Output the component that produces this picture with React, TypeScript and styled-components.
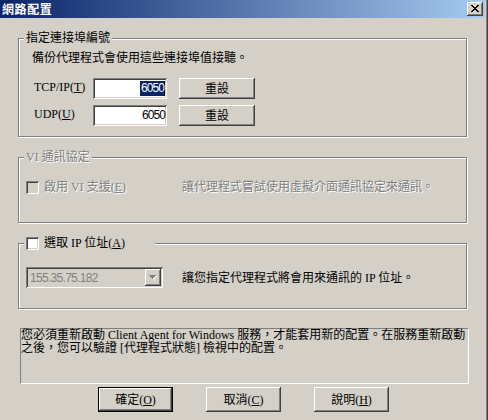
import React from "react";
import styled, { createGlobalStyle, css } from "styled-components";

const Global = createGlobalStyle`
  html, body { margin: 0; padding: 0; background: #D4D0C8; }
  body {
    font-family: "Liberation Serif", "Noto Sans CJK TC", serif;
    font-size: 12px;
    color: #000;
  }
  * { box-sizing: border-box; }
`;

const Window = styled.div`
  width: 488px;
  height: 420px;
  overflow: hidden;
  background: #d4d0c8;
  padding-right: 3px;
  box-shadow: inset -1px 0 #404040, inset -2px 0 #808080;
  display: flex;
  flex-direction: column;
`;

const TitleBar = styled.div`
  height: 18px;
  flex: none;
  display: flex;
  align-items: center;
  justify-content: space-between;
  padding: 0 2px 0 2px;
  background: linear-gradient(to right, #0a246a, #a6caf0);
`;

const Title = styled.span`
  color: #fff;
  font-family: "Noto Sans CJK TC", sans-serif;
  font-weight: 700;
  font-size: 12px;
  line-height: 14px;
  letter-spacing: 0.6px;
`;

const CloseButton = styled.div`
  width: 16px;
  height: 14px;
  background: #d4d0c8;
  box-shadow: inset -1px -1px #404040, inset 1px 1px #fff,
    inset -2px -2px #808080, inset 2px 2px #d4d0c8;
  display: flex;
  align-items: center;
  justify-content: center;
  padding-bottom: 1px;
`;

const Body = styled.div`
  display: flex;
  flex-direction: column;
  align-items: flex-start;
  padding: 20px 0 0 18px;
`;

const GroupBox = styled.div<{ $h: number; $mt?: number }>`
  width: 449px;
  height: ${(p) => p.$h}px;
  margin-top: ${(p) => p.$mt ?? 0}px;
  border: 1px solid #808080;
  box-shadow: inset 1px 1px 0 #fff, 1px 1px 0 #fff;
  display: flex;
  flex-direction: column;
  align-items: flex-start;
`;

const disabledText = css`
  color: #808080;
  text-shadow: 1px 1px 0 #fff;
`;

const Legend = styled.div<{ $disabled?: boolean; $w?: number }>`
  margin: -8px 0 0 5px;
  padding: 0 2px;
  height: 14px;
  line-height: 14px;
  background: #d4d0c8;
  display: flex;
  align-items: center;
  white-space: nowrap;
  ${(p) => (p.$w ? `width: ${p.$w}px;` : "")}
  ${(p) => (p.$disabled ? disabledText : "")}
`;

const Desc = styled.div`
  margin: 6px 0 0 13px;
  line-height: 14px;
  white-space: nowrap;
`;

const PortGrid = styled.div`
  margin: 13px 0 0 15px;
  display: grid;
  grid-template-columns: 47px 74px 76px;
  grid-auto-rows: 21px;
  column-gap: 12px;
  row-gap: 6px;
  align-items: center;
`;

const FieldLabel = styled.span`
  line-height: 14px;
  margin-top: -3px;
  white-space: nowrap;
`;

const sunken = css`
  box-shadow: inset 1px 1px #808080, inset -1px -1px #fff,
    inset 2px 2px #404040, inset -2px -2px #d4d0c8;
`;

const Edit = styled.div`
  height: 21px;
  background: #fff;
  ${sunken};
  display: flex;
  align-items: center;
  justify-content: flex-end;
  padding: 0 2px 0 3px;
  font-family: "Liberation Sans", sans-serif;
  font-size: 12px;
  letter-spacing: -0.9px;
  line-height: 15px;
`;

const Selection = styled.span`
  background: #0a246a;
  color: #fff;
  padding: 0 0 0 1px;
  border-right: 1px solid #000;
`;

const Button = styled.button<{ $default?: boolean; $w?: number; $h?: number }>`
  width: ${(p) => p.$w ?? 76}px;
  height: ${(p) => p.$h ?? 21}px;
  margin: 0;
  padding: 0;
  background: #d4d0c8;
  border: ${(p) => (p.$default ? "1px solid #000" : "none")};
  box-shadow: inset -1px -1px #404040, inset 1px 1px #fff,
    inset -2px -2px #808080, inset 2px 2px #d4d0c8;
  font-family: "Liberation Serif", "Noto Sans CJK TC", serif;
  font-size: 12px;
  line-height: 14px;
  color: #000;
  display: flex;
  align-items: center;
  justify-content: center;
`;

const OptionRow = styled.div<{ $mt: number }>`
  margin: ${(p) => p.$mt}px 0 0 7px;
  display: grid;
  grid-template-columns: 156px auto;
  align-items: center;
`;

const CheckLine = styled.label<{ $disabled?: boolean }>`
  display: flex;
  align-items: center;
  gap: 5px;
  line-height: 14px;
  white-space: nowrap;
  ${(p) => (p.$disabled ? disabledText : "")}
`;

const CheckBox = styled.span<{ $disabled?: boolean }>`
  width: 13px;
  height: 13px;
  flex: none;
  background: ${(p) => (p.$disabled ? "#d4d0c8" : "#fff")};
  ${sunken};
  text-shadow: none;
`;

const Hint = styled.span<{ $disabled?: boolean }>`
  line-height: 14px;
  white-space: nowrap;
  ${(p) => (p.$disabled ? disabledText : "")}
`;

const Combo = styled.div`
  width: 137px;
  height: 21px;
  background: #d4d0c8;
  ${sunken};
  display: flex;
  align-items: center;
  justify-content: space-between;
  padding: 2px 2px 2px 4px;
  font-family: "Liberation Sans", sans-serif;
  font-size: 12px;
  letter-spacing: -0.7px;
  color: #808080;
`;

const DropButton = styled.span`
  width: 16px;
  height: 17px;
  background: #d4d0c8;
  box-shadow: inset -1px -1px #404040, inset 1px 1px #fff,
    inset -2px -2px #808080, inset 2px 2px #d4d0c8;
  display: flex;
  align-items: center;
  justify-content: center;
`;

const InfoBox = styled.div`
  margin: 19px 0 0 2px;
  width: 449px;
  height: 56px;
  border-style: solid;
  border-width: 1px;
  border-color: #808080 #fff #fff #808080;
  line-height: 13px;
  white-space: nowrap;
`;

const ButtonRow = styled.div`
  margin: 3px 0 0 80px;
  display: flex;
  gap: 33px;
`;

const CloseGlyph = () => (
  <svg width="8" height="7" viewBox="0 0 8 7" shapeRendering="crispEdges">
    <path
      d="M0 0h2v1H0zM6 0h2v1H6zM1 1h2v1H1zM5 1h2v1H5zM2 2h4v1H2zM3 3h2v1H3zM2 4h4v1H2zM1 5h2v1H1zM5 5h2v1H5zM0 6h2v1H0zM6 6h2v1H6z"
      fill="#000"
    />
  </svg>
);

const DisabledArrow = () => (
  <svg width="8" height="5" viewBox="0 0 8 5" shapeRendering="crispEdges">
    <path d="M1 1h7v1H1zM2 2h5v1H2zM3 3h3v1H3zM4 4h1v1H4z" fill="#fff" />
    <path d="M0 0h7v1H0zM1 1h5v1H1zM2 2h3v1H2zM3 3h1v1H3z" fill="#808080" />
  </svg>
);

export default function App() {
  return (
    <>
      <Global />
      <Window>
        <TitleBar>
          <Title>網路配置</Title>
          <CloseButton>
            <CloseGlyph />
          </CloseButton>
        </TitleBar>
        <Body>
          <GroupBox $h={99}>
            <Legend>指定連接埠編號</Legend>
            <Desc>備份代理程式會使用這些連接埠值接聽。</Desc>
            <PortGrid>
              <FieldLabel>
                TCP/IP(<u>T</u>)
              </FieldLabel>
              <Edit>
                <Selection>6050</Selection>
              </Edit>
              <Button>重設</Button>
              <FieldLabel>
                UDP(<u>U</u>)
              </FieldLabel>
              <Edit>6050</Edit>
              <Button>重設</Button>
            </PortGrid>
          </GroupBox>

          <GroupBox $h={66} $mt={20}>
            <Legend $disabled>VI 通訊協定</Legend>
            <OptionRow $mt={16}>
              <CheckLine $disabled>
                <CheckBox $disabled />
                <span>
                  啟用 VI 支援(<u>E</u>)
                </span>
              </CheckLine>
              <Hint $disabled>讓代理程式嘗試使用虛擬介面通訊協定來通訊。</Hint>
            </OptionRow>
          </GroupBox>

          <GroupBox $h={66} $mt={20}>
            <Legend $w={131}>
              <CheckLine>
                <CheckBox />
                <span>
                  選取 IP 位址(<u>A</u>)
                </span>
              </CheckLine>
            </Legend>
            <OptionRow $mt={17}>
              <Combo>
                <span>155.35.75.182</span>
                <DropButton>
                  <DisabledArrow />
                </DropButton>
              </Combo>
              <Hint>讓您指定代理程式將會用來通訊的 IP 位址。</Hint>
            </OptionRow>
          </GroupBox>

          <InfoBox>
            您必須重新啟動 Client Agent for Windows 服務，才能套用新的配置。在服務重新啟動
            <br />
            之後，您可以驗證 [代理程式狀態] 檢視中的配置。
          </InfoBox>

          <ButtonRow>
            <Button $default $w={75} $h={25}>
              確定(<u>O</u>)
            </Button>
            <Button $w={75} $h={25}>
              取消(<u>C</u>)
            </Button>
            <Button $w={75} $h={25}>
              說明(<u>H</u>)
            </Button>
          </ButtonRow>
        </Body>
      </Window>
    </>
  );
}
